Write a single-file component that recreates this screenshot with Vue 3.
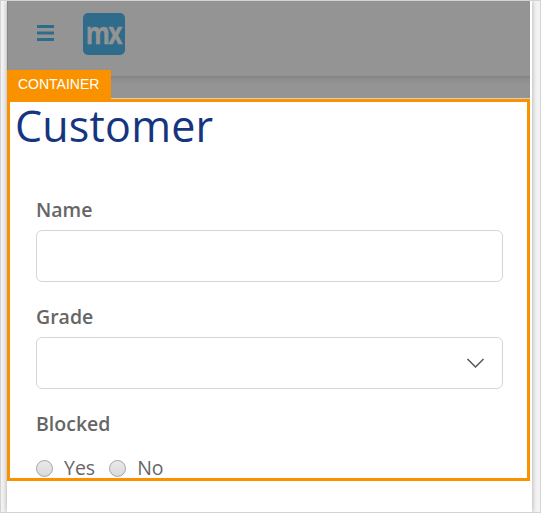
<script setup>
import { ref } from 'vue'

const name = ref('')
const blocked = ref(null)
const options = ['Yes', 'No']
</script>

<template>
  <div class="frame">
    <main class="page">
      <header class="topbar">
        <svg class="menu" width="17" height="17" viewBox="0 0 17 17">
          <path d="M0 1.5h17M0 8h17M0 14.5h17" stroke="#2f6c8b" stroke-width="3" />
        </svg>
        <div class="logo"><span>mx</span></div>
      </header>
      <div class="shade"></div>
      <section class="container">
        <span class="tag">CONTAINER</span>
        <h1>Customer</h1>
        <form class="form">
          <label class="label" for="name">Name</label>
          <input id="name" v-model="name" class="control" type="text" />
          <label class="label">Grade</label>
          <div class="control select">
            <svg width="18" height="11" viewBox="0 0 18 11" fill="none">
              <path d="M1.5 1 9.5 9 17.5 1" stroke="#555" stroke-width="1.5" />
            </svg>
          </div>
          <span class="label">Blocked</span>
          <div class="radios">
            <label v-for="option in options" :key="option" class="radio">
              <input v-model="blocked" type="radio" name="blocked" :value="option" />
              <span>{{ option }}</span>
            </label>
          </div>
        </form>
      </section>
    </main>
  </div>
</template>

<style>
body {
  margin: 0;
}
</style>

<style scoped>
* {
  box-sizing: border-box;
}
.frame {
  width: 541px;
  height: 513px;
  padding-left: 6px;
  border: 1px solid #d3d3d3;
  background: #f3f3f3;
  overflow: hidden;
  font-family: "Open Sans", "Noto Sans", sans-serif;
  color: #666;
}
.page {
  width: 525px;
  height: 511px;
  background: #fff;
  box-shadow: 0 0 5px rgba(0, 0, 0, 0.32);
}
.topbar {
  display: flex;
  align-items: center;
  width: 523px;
  height: 75px;
  padding: 0 0 10px 29px;
  border-left: 1px solid #858585;
  background: #949494;
}
.logo {
  display: flex;
  align-items: center;
  justify-content: center;
  width: 42px;
  height: 42px;
  margin-left: 29px;
  border-radius: 5px;
  background: #2f6c8b;
  color: #949494;
}
.logo span {
  margin: -1px 2px 0 0;
  font: bold 30px/30px "Open Sans", sans-serif;
  letter-spacing: -2px;
  transform: scaleX(0.82);
  -webkit-text-stroke: 0.4px #949494;
}
.shade {
  width: 523px;
  height: 23px;
  border-bottom: 1px solid #d0d0d0;
  background: linear-gradient(#828282, #8d8d8d 3px, #949494 8px);
}
.container {
  position: relative;
  width: 523px;
  height: 382px;
  border: 3px solid #fa9200;
}
.tag {
  position: absolute;
  top: -32px;
  left: -3px;
  width: 104px;
  height: 30px;
  padding-left: 11px;
  background: #fa9200;
  color: #fff;
  font: 14px/29px "Liberation Sans", Arial, sans-serif;
}
h1 {
  margin: 0;
  padding-left: 5px;
  color: #16357f;
  font-size: 43px;
  font-weight: 400;
  line-height: 48px;
  letter-spacing: 0.2px;
}
.form {
  padding: 46px 24px 0 26px;
}
.label {
  display: block;
  height: 34px;
  font-size: 19.5px;
  font-weight: 600;
  line-height: 28px;
}
.control {
  display: block;
  width: 467px;
  height: 52px;
  margin: 0 0 21px;
  padding: 0 18px;
  border: 1px solid #d6d6d6;
  border-radius: 6px;
  background: #fff;
}
.select {
  display: flex;
  align-items: center;
  justify-content: flex-end;
}
.radios {
  display: flex;
  gap: 14px;
  margin-top: 10px;
}
.radio {
  display: flex;
  align-items: center;
  gap: 11px;
  font-size: 19.5px;
  line-height: 28px;
}
.radio input {
  appearance: none;
  width: 17px;
  height: 17px;
  margin: 1px 0 0;
  border: 1px solid #a5a5a5;
  border-radius: 50%;
  background: linear-gradient(#e9e9e9, #dadada);
}
</style>
